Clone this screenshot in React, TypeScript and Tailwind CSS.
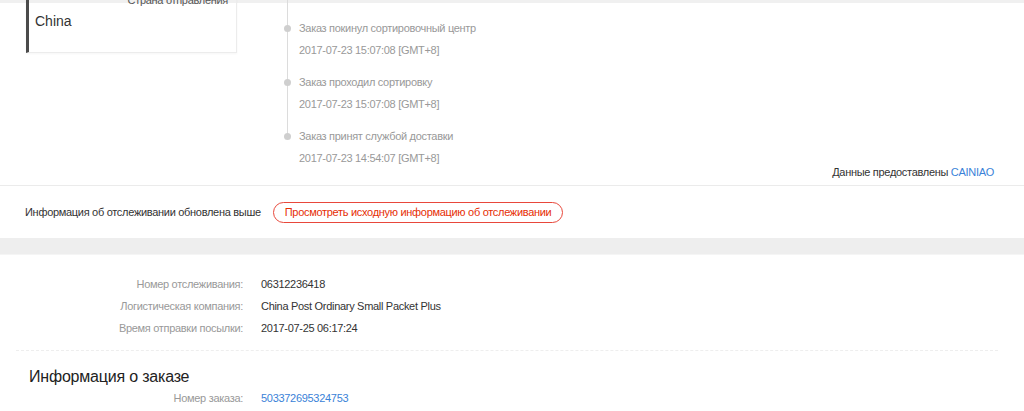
export default function App() {
  const events = [
    { title: "Заказ покинул сортировочный центр", time: "2017-07-23 15:07:08 [GMT+8]" },
    { title: "Заказ проходил сортировку", time: "2017-07-23 15:07:08 [GMT+8]" },
    { title: "Заказ принят службой доставки", time: "2017-07-23 14:54:07 [GMT+8]" },
  ]

  const details = [
    { label: "Номер отслеживания:", value: "06312236418" },
    { label: "Логистическая компания:", value: "China Post Ordinary Small Packet Plus" },
    { label: "Время отправки посылки:", value: "2017-07-25 06:17:24" },
  ]

  return (
    <div
      className="w-[1024px] h-[411px] overflow-hidden bg-white text-[11px] tracking-[-0.3px] text-[#333]"
      style={{ fontFamily: '"Liberation Sans", Arial, sans-serif' }}
    >
      {/* Tracking timeline */}
      <div className="relative h-[186px] border-b border-[#ebebeb]">
        <div className="absolute top-0 left-0 right-0 h-[3px] bg-[#f0f0f0]" />
        <div className="relative flex">
          {/* Origin card */}
          <div className="w-[261px] shrink-0 pl-[26px]">
            <div className="-mt-[9px] h-[62px] w-[211px] border border-[#ececec] border-l-[3px] border-l-[#4b4b4b] shadow-[0_1px_2px_rgba(0,0,0,0.04)]">
              <div className="pr-[8px] pt-[1px] text-right text-[11px] leading-[14px] text-[#555]">Страна отправления</div>
              <div className="pl-[6px] pt-[5px] text-[14px] leading-[18px] tracking-normal text-[#333]">China</div>
            </div>
          </div>

          {/* Events */}
          <div className="relative ml-[26px] pt-[21px]">
            <div className="absolute left-0 top-0 h-[139px] w-px bg-[#dcdcdc]" />
            {events.map((e, i) => (
              <div key={i} className="relative h-[54px] pl-[12px]">
                <div className="absolute left-[-3px] top-[4px] h-[7px] w-[7px] rounded-full bg-[#cfcfcf]" />
                <div className="leading-[14px] text-[#999]">{e.title}</div>
                <div className="mt-[8px] leading-[14px] text-[#999]">{e.time}</div>
              </div>
            ))}
          </div>
        </div>
        <div className="absolute right-[30px] top-[165px] leading-[14px] text-[#333]">
          Данные предоставлены <span className="text-[#3a82d8]">CAINIAO</span>
        </div>
      </div>

      {/* Original info link */}
      <div className="flex h-[52px] items-center gap-[12px] pl-[25px]">
        <span className="text-[#333]">Информация об отслеживании обновлена выше</span>
        <span className="flex h-[21px] items-center rounded-full border border-[#e8483b] px-[11px] text-[#e62e04]">
          Просмотреть исходную информацию об отслеживании
        </span>
      </div>

      <div className="h-[17px] border-b border-[#f5f5f5] bg-[#eeeeee]" />

      {/* Logistics details */}
      <div className="px-[16px] pt-[21px]">
        <div className="flex flex-col gap-[5px]">
          {details.map((d, i) => (
            <div key={i} className="flex h-[17px] items-center">
              <div className="w-[227px] text-right text-[#999]">{d.label}</div>
              <div className="pl-[18px] text-[#333]">{d.value}</div>
            </div>
          ))}
        </div>
        <div className="mt-[13px] w-[982px] border-t border-dashed border-[#eeeeee]" />

        <div className="pl-[13px] pt-[16px] text-[16px] leading-[20px] tracking-[-0.2px] text-[#222]">Информация о заказе</div>
        <div className="mt-[3px] flex h-[17px] items-center">
          <div className="w-[227px] text-right text-[#999]">Номер заказа:</div>
          <div className="pl-[18px] text-[#3a82d8]">503372695324753</div>
        </div>
      </div>
    </div>
  )
}
